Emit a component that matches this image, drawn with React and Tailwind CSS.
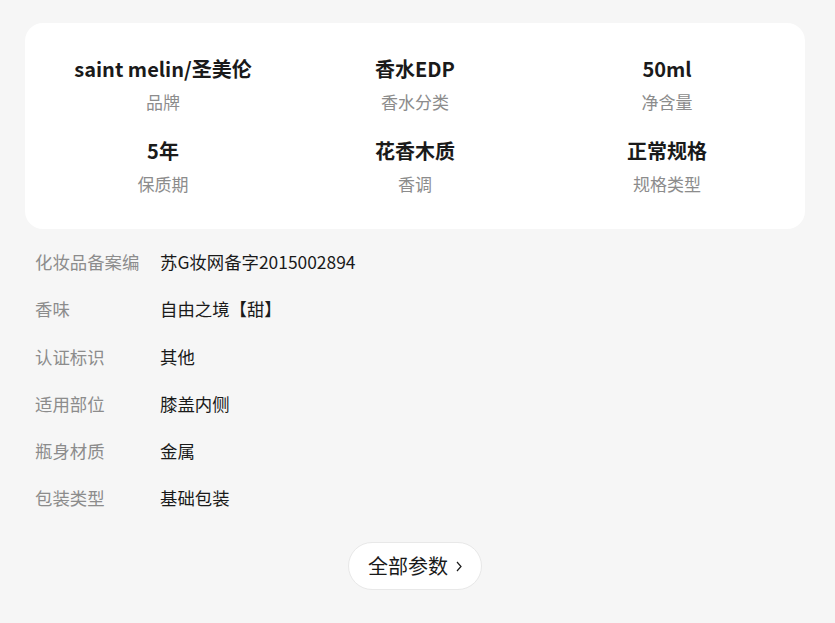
import React from 'react';

const specs = [
  { value: 'saint melin/圣美伦', label: '品牌' },
  { value: '香水EDP', label: '香水分类' },
  { value: '50ml', label: '净含量' },
  { value: '5年', label: '保质期' },
  { value: '花香木质', label: '香调' },
  { value: '正常规格', label: '规格类型' },
];

const params = [
  ['化妆品备案编', '苏G妆网备字2015002894'],
  ['香味', '自由之境【甜】'],
  ['认证标识', '其他'],
  ['适用部位', '膝盖内侧'],
  ['瓶身材质', '金属'],
  ['包装类型', '基础包装'],
];

export default function App() {
  return (
    <div
      className="min-h-[623px] bg-[#f6f6f6] pl-[25px] pr-[30px] pt-[23px] pb-[32px]"
      style={{ fontFamily: '"Noto Sans CJK SC", "Noto Sans", sans-serif' }}
    >
      {/* key specs card */}
      <div className="bg-white rounded-[18px] px-[12px] pt-[32px] pb-[33px] grid grid-cols-3 gap-y-[23px]">
        {specs.map(s => (
          <div key={s.label} className="flex flex-col items-center">
            <div className="text-[20px] leading-[28px] font-bold text-[#1a1a1a]">{s.value}</div>
            <div className="mt-[7px] text-[17px] leading-[24px] text-[#8c8c8c]">{s.label}</div>
          </div>
        ))}
      </div>

      {/* param list */}
      <div className="mt-[21px] flex flex-col gap-[23.3px]">
        {params.map(([k, v]) => (
          <div key={k} className="flex text-[17.4px] leading-[24px]">
            <div className="w-[135px] pl-[10px] text-[#8c8c8c]">{k}</div>
            <div className="text-[#1a1a1a]">{v}</div>
          </div>
        ))}
      </div>

      <div className="mt-[32px] flex justify-center">
        <button className="h-[48px] w-[134px] rounded-full bg-white border border-[#e8e8e8] flex items-center justify-center gap-[8px] text-[20px] text-[#1a1a1a]">
          <span>全部参数</span>
          <svg width="6" height="11" viewBox="0 0 6 11" fill="none" className="mt-[1px]">
            <path d="M1 1L5 5.5L1 10" stroke="#1a1a1a" strokeWidth="1.2" />
          </svg>
        </button>
      </div>
    </div>
  );
}
